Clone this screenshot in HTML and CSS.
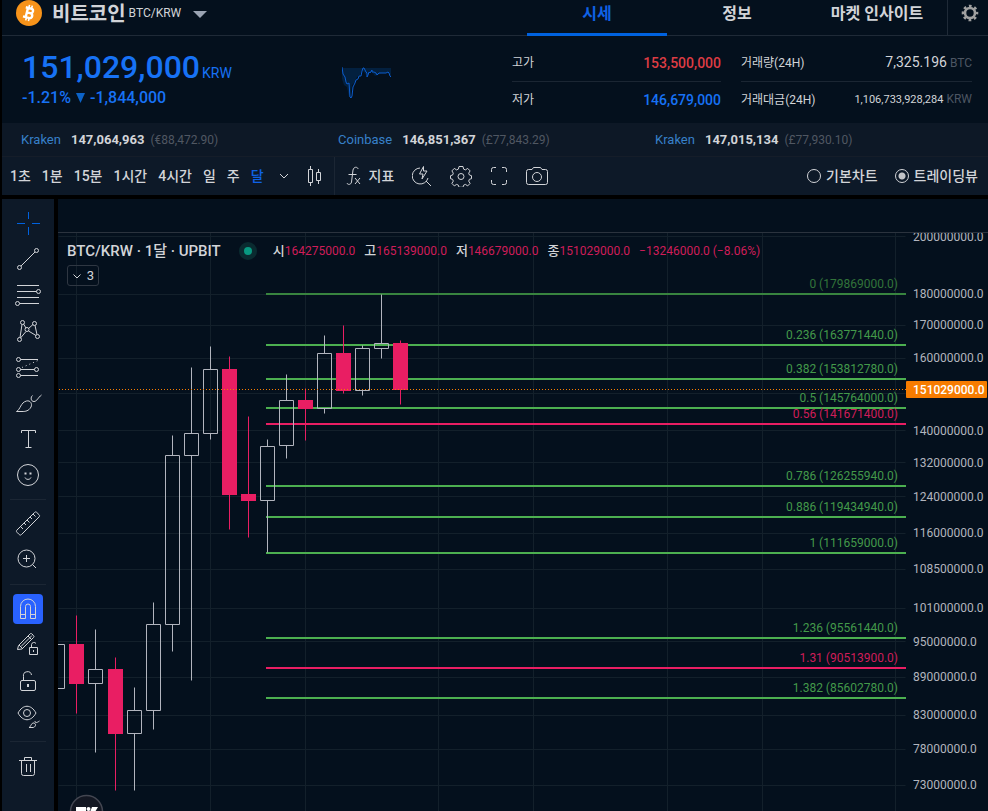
FILE: index.html
```html
<!DOCTYPE html>
<html lang="ko">
<head>
<meta charset="utf-8">
<title>비트코인 BTC/KRW</title>
<link rel="stylesheet" href="styles.css">
</head>
<body>
<div class="app">
  <header class="topbar">
    <svg class="coin" viewBox="0 0 26 26" aria-hidden="true">
      <circle cx="13" cy="13" r="13" fill="#f7931a"/>
      <g transform="rotate(14 13 13)" fill="none" stroke="#fff" stroke-width="2.4">
        <path d="M8.5 8.2h5.6a2.3 2.3 0 0 1 0 4.7h-3.4M10.8 7.5v11M8 17.8h6.8a2.5 2.5 0 0 0 0-4.9"/>
        <path stroke-width="1.6" d="M11.6 5v3M14.4 5v3M11.6 18v3M14.4 18v3"/>
      </g>
    </svg>
    <h1 class="coin-name">비트코인</h1>
    <span class="pair">BTC/KRW</span>
    <button class="icon-btn coin-menu" aria-label="마켓 선택"><svg width="14" height="8" viewBox="0 0 14 8"><path d="M0 0h14L7 7z" fill="#9aa3b2"/></svg></button>
    <nav class="tabs">
      <a class="tab active" href="#price">시세</a>
      <a class="tab" href="#info">정보</a>
      <a class="tab" href="#insight">마켓 인사이트</a>
    </nav>
    <button class="icon-btn settings" aria-label="설정"><svg width="18" height="18" viewBox="0 0 18 18"><circle cx="9" cy="9" r="5" fill="none" stroke="#a0a0a0" stroke-width="2.6"/><circle cx="9" cy="9" r="7" fill="none" stroke="#a0a0a0" stroke-width="2.6" stroke-dasharray="2.7 2.8" stroke-dashoffset="1.35"/></svg></button>
  </header>

  <section class="summary">
    <div class="price">
      <div class="price-main"><strong>151,029,000</strong><span>KRW</span></div>
      <div class="price-change"><span>-1.21%</span><svg width="9" height="10" viewBox="0 0 9 10" aria-hidden="true"><path d="M0 0h9L4.500 10z" fill="#0c63c8"/></svg><span>-1,844,000</span></div>
    </div>
    <svg class="spark" viewBox="0 0 50 34" aria-hidden="true">
      <path d="M0 1h49v8l-2-3-2-1-2 1-4 0-3 2-3 1-3-4-3 0-2 1-1 2-2-3-2-2-2 5-3 2-2 5-3 3-2 12-1 0-2-10-3-2-2-6z" fill="#03203f"/>
      <path d="M0 0l1 7 2 3 1 5 1 2 2-1 1 14 1 1 1-2 1-9 2-4 1-3 2-1 1-3 2 0 1-5 1-3 1 0 1 2 1 2 1 1 0 4 1-2 1-3 1 1 2-3 0 2 2 0 2 1 1 2 1-1 1-1 4 0 3 0 2-1 1 1 1 3 1 1" fill="none" stroke="#0b5ccd"/>
    </svg>
    <dl class="stats range">
      <div><dt>고가</dt><dd class="up">153,500,000</dd></div>
      <div><dt>저가</dt><dd class="down">146,679,000</dd></div>
    </dl>
    <dl class="stats volume">
      <div><dt>거래량(24H)</dt><dd>7,325.196<i>BTC</i></dd></div>
      <div><dt>거래대금(24H)</dt><dd class="long">1,106,733,928,284<i>KRW</i></dd></div>
    </dl>
  </section>

  <section class="rates">
    <div><a href="#kraken-eur">Kraken</a><b>147,064,963</b><span>(€88,472.90)</span></div>
    <div><a href="#coinbase">Coinbase</a><b>146,851,367</b><span>(£77,843.29)</span></div>
    <div><a href="#kraken-gbp">Kraken</a><b>147,015,134</b><span>(£77,930.10)</span></div>
  </section>

  <div class="toolbar">
    <div class="intervals">
      <button>1초</button><button>1분</button><button>15분</button><button>1시간</button><button>4시간</button><button>일</button><button>주</button><button class="on">달</button>
      <button aria-label="더 보기"><svg width="12" height="12" viewBox="0 0 12 12"><path d="M2 4l4 4 4-4"/></svg></button>
    </div>
    <button class="candle-btn" aria-label="캔들"><svg width="16" height="20" viewBox="0 0 16 20"><path d="M1.500 3.500h4v13h-4zM3.500 0v3M3.500 17v3M9.500 6.500h4v8h-4zM11.500 3v3M11.500 15v3"/></svg></button>
    <div class="tools">
      <button class="indicator"><svg width="17" height="20" viewBox="0 0 17 20"><path d="M12 3c0-2-4-3-5 1L5.500 16c-.4 3-4 3-4.500 1M2.500 8.500h8M9 12l5 6M14 12l-5 6"/></svg>지표</button>
      <button aria-label="빠른 검색"><svg width="20" height="22" viewBox="0 0 20 22"><path d="M8 3a8 8 0 1 0 8 10M14 16l5 5M11.500 1.500L7.500 9h3.500l-1 5 5-8h-3.500z"/></svg></button>
      <button aria-label="차트 설정"><svg width="22" height="22" viewBox="0 0 22 22"><path d="M9 1.500h4l.6 2.600 1.800.8 2.300-1.500 2.400 2.500-1.400 2.300.7 1.800 2.100.7v3l-2.100.6-.7 1.800 1.400 2.300-2.400 2.500-2.300-1.500-1.800.8-.6 2.100H9l-.6-2.100-1.800-.8-2.300 1.500-2.400-2.500 1.400-2.300-.7-1.800-2.100-.6v-3l2.100-.7.7-1.800-1.400-2.300 2.400-2.500 2.300 1.500 1.800-.8z"/><circle cx="11" cy="11.500" r="3"/></svg></button>
      <button aria-label="전체 화면"><svg width="18" height="20" viewBox="0 0 18 20"><path d="M1.500 6V3.500a2 2 0 0 1 2-2H6M12 1.500h2.500a2 2 0 0 1 2 2V6M16.500 14v2.500a2 2 0 0 1-2 2H12M6 18.500H3.500a2 2 0 0 1-2-2V14"/></svg></button>
      <button aria-label="스냅샷"><svg width="22" height="20" viewBox="0 0 22 20"><path d="M2.500 3.500H6l1.500-2h7l1.500 2h3.500a2 2 0 0 1 2 2v11a2 2 0 0 1-2 2h-17a2 2 0 0 1-2-2v-11a2 2 0 0 1 2-2z"/><circle cx="11" cy="11" r="4.500"/></svg></button>
    </div>
    <fieldset class="modes">
      <label><input type="radio" name="mode">기본차트</label>
      <label><input type="radio" name="mode" checked>트레이딩뷰</label>
    </fieldset>
  </div>

  <main class="workspace">
    <aside class="rail">
      <button class="cross" aria-label="십자선"><svg viewBox="0 0 36 36"><path d="M18.500 7v7M18.500 22v8M7 18.500h8M22 18.500h8"/></svg></button>
      <button aria-label="추세선"><svg viewBox="0 0 36 36"><circle cx="9.500" cy="26.500" r="2"/><circle cx="26.500" cy="9.500" r="2"/><path d="M11 25L25 11"/></svg></button>
      <button aria-label="피보나치"><svg viewBox="0 0 36 36"><path d="M7 8.500h22M7 14.500h19.500M7 20.500h22M9.500 26.500H29"/><circle cx="28.500" cy="14.500" r="2"/><circle cx="7.500" cy="26.500" r="2"/></svg></button>
      <button aria-label="패턴"><svg viewBox="0 0 36 36"><circle cx="12.500" cy="9.500" r="2"/><circle cx="24.500" cy="10.500" r="2"/><circle cx="27.500" cy="23.500" r="2"/><circle cx="9.500" cy="26.500" r="2"/><circle cx="17" cy="16.500" r="2"/><path d="M12 11.500L10 24.500M13.500 11l2.500 4M18.500 15.500l4.500-4M25 12.500l2 9M18.500 18l7.500 4.500M16 18.500L10.500 25"/></svg></button>
      <button aria-label="예측"><svg viewBox="0 0 36 36"><circle cx="8.500" cy="10.500" r="2"/><circle cx="8.500" cy="20.500" r="2"/><circle cx="8.500" cy="26.500" r="2"/><circle cx="26.500" cy="20.500" r="2"/><path d="M10.500 10.500H28M10.500 20.500h14M10.500 26.500H28"/><path stroke-dasharray="1 3" d="M12 18.500l16-7"/></svg></button>
      <button aria-label="브러시"><svg viewBox="0 0 36 36"><path d="M6.500 26.500c4-2 4-9 10-10.500 4-1 6 3 4.500 6-2 4-6 4.500-8 4.500zM22.500 10.500c-2 1.500-2 6 1.500 6 3 0 4-4 7.500-6.500"/></svg></button>
      <button aria-label="텍스트"><svg viewBox="0 0 36 36"><path d="M11.500 12V9.500h14V12M18.500 9.500v17M15.500 26.500h6"/></svg></button>
      <button aria-label="이모지"><svg viewBox="0 0 36 36"><circle cx="18" cy="18" r="10.500"/><path d="M15 20.500c1 2.500 5 2.500 6 0"/><path stroke-width="2" d="M14.500 16.500h2M19.500 16.500h2"/></svg></button>
      <hr>
      <button aria-label="측정"><svg viewBox="0 0 36 36"><path d="M7 24L24.500 6.500c.8-.8 1.500-.8 2.300 0l2.200 2.200c.8.800.8 1.500 0 2.300L11.500 28.500c-.8.800-1.500.8-2.300 0L7 26.300c-.8-.8-.8-1.500 0-2.300zM10.500 20.500l2.500 2.500M14 17l2 2M17 14l2.500 2.500M20 11l2 2M23 8l2.500 2.500"/></svg></button>
      <button aria-label="확대"><svg viewBox="0 0 36 36"><circle cx="16.500" cy="16.500" r="8.500"/><path d="M16.500 13v7M13 16.500h7M22.500 22.500L26 26"/></svg></button>
      <hr>
      <button class="magnet" aria-label="자석 모드"><svg viewBox="3 3 30 30"><path d="M10.500 27.500v-12a7.500 7.500 0 0 1 15 0v12h-5v-12a2.500 2.500 0 0 0-5 0v12zM10.500 23.500h5M20.500 23.500h5"/></svg></button>
      <button aria-label="그리기 유지"><svg viewBox="0 0 36 36"><path d="M7.500 22.500l1-4L20 7c.7-.7 1.300-.7 2 0l1.500 1.500c.7.700.7 1.300 0 2L12 22zM9 18l4 4M11 19.500l11-11M18 9l4 4M19.500 20.500h8v7h-8zM21.500 20v-2.500a2.500 2.500 0 0 1 4.500-1M23.500 23v2"/></svg></button>
      <button aria-label="잠금"><svg viewBox="0 0 36 36"><rect x="10.500" y="17.500" width="15" height="10" rx="1.500"/><path d="M13.500 17v-3.500a4 4 0 0 1 8-1.500"/><path stroke-width="2" d="M18 21v3"/></svg></button>
      <button aria-label="숨기기"><svg viewBox="0 0 36 36"><path d="M8 14c5-9 13-9 18 0-5 9-13 9-18 0z"/><circle cx="17" cy="14" r="3.500"/><path d="M19 28.500c2-.5 2-5 5-4.500 3 1 1 4.500-1 4.500zM25 22c0 3 3 1 4.500 0"/></svg></button>
      <hr>
      <button aria-label="삭제"><svg viewBox="0 0 36 36"><path d="M9 12.500h18M11.500 12.500v13a2 2 0 0 0 2 2h9a2 2 0 0 0 2-2v-13M14.500 12v-2.500h7V12M16.500 16v8M20.500 16v8"/></svg></button>
    </aside>

    <section class="chart">
      <div class="chart-head"></div>
      <div class="chart-body">
        <svg class="plot" viewBox="58 233 848 578" preserveAspectRatio="xMinYMin slice" role="img" aria-label="BTC/KRW 월봉 차트">
          <g transform="translate(.5 .5)">
            <path class="grid" d="M58 236H905M58 294H905M58 325H905M58 358H905M58 393H905M58 430H905M58 462H905M58 496H905M58 533H905M58 569H905M58 608H905M58 641H905M58 677H905M58 715H905M58 749H905M58 785H905M76 232V811M210 232V811M305 232V811M438 232V811M533 232V811M667 232V811M762 232V811M895 232V811"/>
          </g>
          <path class="fib first" d="M266 294H906"/>
          <path class="fib" d="M266 345H906M266 379H906M266 408H906M266 486H906M266 517H906M266 553H906M266 638H906M266 698H906"/>
          <path class="fib pink" d="M266 424H906M266 668H906"/>
          <g class="fib-text" text-anchor="end">
            <text class="first" x="898" y="288">0 (179869000.0)</text>
            <text x="898" y="339">0.236 (163771440.0)</text>
            <text x="898" y="373">0.382 (153812780.0)</text>
            <text x="898" y="402">0.5 (145764000.0)</text>
            <text class="pink" x="898" y="418">0.56 (141671400.0)</text>
            <text x="898" y="480">0.786 (126255940.0)</text>
            <text x="898" y="511">0.886 (119434940.0)</text>
            <text x="898" y="547">1 (111659000.0)</text>
            <text x="898" y="632">1.236 (95561440.0)</text>
            <text class="pink" x="898" y="662">1.31 (90513900.0)</text>
            <text x="898" y="692">1.382 (85602780.0)</text>
          </g>
          <g transform="translate(.5 .5)">
            <path class="rise" d="M50 644h14v44h-14zM88 669h14v14h-14zM95 629V669M95 683V752M127 710h14v23h-14zM134 687V710M134 733V790M146 624h14v86h-14zM153 602V624M153 710V729M165 455h14v169h-14zM172 435V455M172 624V651M184 433h14v22h-14zM191 367V433M191 455V680M203 369h14v64h-14zM210 346V369M210 433V439M260 446h14v54h-14zM267 439V446M267 500V552M279 400h14v45h-14zM286 374V400M286 445V458M317 353h14v55h-14zM324 335V353M324 408V413M355 348h14v42h-14zM362 345V348M362 390V395M374 343h14v5h-14zM381 294V343M381 348V358"/>
            <path class="fall-wick" d="M76 615V713M115 657V790M229 356V529M248 416V537M305 388V440M343 325V393M400 340V404"/>
          </g>
          <path class="fall" d="M69 644h15v40h-15zM108 669h15v65h-15zM222 369h15v126h-15zM241 494h15v7h-15zM298 400h15v9h-15zM336 353h15v38h-15zM393 343h15v47h-15z"/>
          <path class="last" d="M58 389.500H906"/>
          <circle cx="86.500" cy="811.500" r="16" fill="#131722" stroke="#434651" stroke-width="1.500"/>
          <path d="M76 807h10v4h-10zM92 807h6l-3 5h-5z" fill="#fff"/><circle cx="88.500" cy="809" r="2" fill="#fff"/>
        </svg>
        <svg class="axis" viewBox="906 233 82 578" preserveAspectRatio="xMinYMin slice">
          <g>
            <text x="913" y="241">200000000.0</text><text x="913" y="298">180000000.0</text><text x="913" y="329">170000000.0</text><text x="913" y="362">160000000.0</text><text x="913" y="435">140000000.0</text><text x="913" y="467">132000000.0</text><text x="913" y="501">124000000.0</text><text x="913" y="537">116000000.0</text><text x="913" y="573">108500000.0</text><text x="913" y="612">101000000.0</text><text x="913" y="646">95000000.0</text><text x="913" y="681">89000000.0</text><text x="913" y="719">83000000.0</text><text x="913" y="753">78000000.0</text><text x="913" y="789">73000000.0</text>
          </g>
          <rect x="906" y="381" width="81" height="17" rx="1" fill="#f77c00"/>
          <text class="now" x="913" y="394">151029000.0</text>
        </svg>
        <div class="legend">
          <div class="legend-row">
            <span class="symbol">BTC/KRW · 1달 · UPBIT</span><span class="status"></span>
            <span class="ohlc"><span>시<b>164275000.0</b></span><span>고<b>165139000.0</b></span><span>저<b>146679000.0</b></span><span>종<b>151029000.0</b></span><b>−13246000.0 (−8.06%)</b></span>
          </div>
          <button class="chip"><svg width="10" height="10" viewBox="0 0 10 10" aria-hidden="true"><path d="M1.500 3.500L5 7l3.500-3.500"/></svg>3</button>
        </div>
      </div>
    </section>
  </main>
</div>
</body>
</html>
```
FILE: styles.css
```css
* { box-sizing: border-box; }

body {
  margin: 0;
  background: #000;
  color: #d2d4d8;
  font: 14px/20px Roboto, "Noto Sans CJK KR", sans-serif;
}

button {
  margin: 0;
  padding: 0;
  border: 0;
  background: none;
  color: inherit;
  font: inherit;
  cursor: pointer;
}

a { color: inherit; text-decoration: none; }
svg { display: block; flex: none; }
dl, dd, h1 { margin: 0; }

.app {
  display: flex;
  flex-direction: column;
  height: 100vh;
  min-height: 640px;
  padding-left: 2px;
  overflow: hidden;
}

.topbar {
  display: flex;
  flex: none;
  height: 36px;
  padding-left: 14px;
  background: #04101d;
  border-bottom: 1px solid #1f2a37;
}
.coin { width: 26px; height: 26px; }
.coin-name { margin-left: 10px; font-size: 20px; line-height: 28px; font-weight: 700; }
.pair { margin-left: 3px; font-size: 12px; line-height: 26px; }
.coin-menu { display: flex; align-items: center; height: 30px; margin-left: 12px; }
.tabs { display: flex; margin-left: auto; }
.tab {
  width: 140px;
  height: 36px;
  font-size: 16px;
  line-height: 28px;
  font-weight: 700;
  text-align: center;
}
.tab.active { color: #0f62e6; border-bottom: 3px solid #0062df; }
.settings {
  display: flex;
  justify-content: center;
  width: 41px;
  padding: 4px 0 0 4px;
  border-left: 1px solid #1f2a37;
}

.summary {
  display: flex;
  flex: none;
  height: 87px;
  padding: 10px 16px 0 20px;
  background: #04101d;
}
.price { width: 320px; color: #1772f5; }
.price-main { display: flex; align-items: baseline; gap: 2px; height: 42px; }
.price-main strong { font-size: 32px; line-height: 42px; font-weight: 500; }
.price-main span { font-size: 14px; }
.price-change { display: flex; align-items: center; gap: 5px; height: 20px; font-size: 16px; font-weight: 500; }
.spark { width: 50px; height: 34px; margin-top: 21px; }
.stats > div { display: flex; justify-content: space-between; align-items: center; height: 35px; }
.stats > div:first-child { height: 36px; padding-bottom: 2px; border-bottom: 1px solid #1b2633; }
.stats dt { font-size: 12px; }
.stats dd { font-weight: 500; }
.stats i { margin-left: 3px; color: #4d5663; font-size: 12px; font-style: normal; font-weight: 400; }
.stats .long { font-size: 11px; }
.stats .up { color: #dd3c44; }
.stats .down { color: #1772f5; }
.range { width: 209px; margin-left: auto; }
.volume { width: 231px; margin-left: 20px; }
.volume dd { font-weight: 400; }

.rates {
  display: grid;
  flex: none;
  grid-template-columns: repeat(3, 1fr);
  align-items: center;
  height: 33px;
  padding: 0 16px 0 19px;
  background: #0d1826;
  font-size: 13px;
}
.rates a { color: #3780c9; }
.rates b { margin: 0 6px 0 10px; font-weight: 700; }
.rates span { color: #505762; font-size: 12px; }

.toolbar {
  display: flex;
  flex: none;
  align-items: center;
  height: 39px;
  border-top: 1px solid #151d29;
  background: #0d1928;
  padding: 0 10px 0 8px;
}
.toolbar svg, .rail svg, .chip svg { fill: none; stroke: #d2d4d8; }
.intervals { display: flex; gap: 11px; font-weight: 500; }
.intervals .on { color: #0f62e6; }
.intervals svg { margin-left: 3px; }
.candle-btn { margin-left: 17px; }
.tools {
  display: flex;
  align-items: center;
  align-self: stretch;
  gap: 18px;
  margin-left: 11px;
  padding-left: 11px;
  border-left: 1px solid #1b2634;
}
.indicator { display: flex; align-items: center; gap: 6px; font-weight: 500; }
.modes { display: flex; gap: 17px; margin: 0 0 0 auto; padding: 0; border: 0; }
.modes label { display: flex; align-items: center; gap: 5px; font-weight: 500; white-space: nowrap; }
.modes input {
  appearance: none;
  width: 14px;
  height: 14px;
  margin: 0;
  border: 1px solid #d2d4d8;
  border-radius: 50%;
}
.modes input:checked { background: radial-gradient(circle, #c2c4c8 0 3px, transparent 4px); }

.workspace { display: flex; flex: 1; gap: 4px; min-height: 0; margin-top: 4px; }

.rail {
  display: flex;
  flex: none;
  flex-direction: column;
  align-items: center;
  width: 52px;
  padding-top: 6px;
  background: #0d1928;
}
.rail button { flex: none; width: 36px; height: 36px; }
.rail svg { width: 100%; height: 100%; }
.rail .cross svg { stroke: #0062df; }
.rail .magnet { width: 30px; height: 30px; margin: 3px 0; border-radius: 4px; background: #2962ff; }
.rail hr { width: 36px; height: 1px; margin: 6px 0; border: 0; background: #1b2634; flex: none; }

.chart { display: flex; flex: 1; flex-direction: column; min-width: 0; background: #04101d; }
.chart-head { flex: none; height: 34px; border-bottom: 1px solid #2b333e; }
.chart-body { position: relative; display: flex; flex: 1; min-height: 0; }
.plot { flex: 1; min-width: 0; height: 100%; }
.axis { width: 82px; height: 100%; font-size: 12px; fill: #b2b5be; }
.axis .now { fill: #fff; font-weight: 500; }
.grid { stroke: #13202b; }
.fib { stroke: #4caf50; stroke-width: 2; }
.fib.first { stroke: #38843f; }
.fib.pink { stroke: #e91e63; }
.fib-text { fill: #43994a; font-size: 12px; }
.fib-text .first { fill: #32743a; }
.fib-text .pink { fill: #cf1d59; }
.rise { fill: none; stroke: #b2b5be; }
.fall-wick { stroke: #e91e63; }
.fall { fill: #e91e63; }
.last { stroke: #f77c00; stroke-dasharray: 1 2; stroke-dashoffset: 2; }

.legend { position: absolute; top: 8px; left: 9px; }
.legend-row { display: flex; align-items: center; height: 20px; white-space: nowrap; }
.symbol { font-size: 15px; font-weight: 500; }
.status {
  width: 18px;
  height: 18px;
  margin: 0 16px 0 18px;
  border: 5px solid #0a2b30;
  border-radius: 50%;
  background: #089981;
}
.ohlc { display: flex; gap: 9px; font-size: 13px; font-weight: 500; }
.ohlc b { color: #cf1d59; font-size: 12px; font-weight: 400; }
.chip {
  display: flex;
  align-items: center;
  justify-content: center;
  gap: 5px;
  width: 32px;
  height: 21px;
  margin-top: 4px;
  border: 1px solid #2f3742;
  border-radius: 3px;
  font-size: 13px;
}
```
